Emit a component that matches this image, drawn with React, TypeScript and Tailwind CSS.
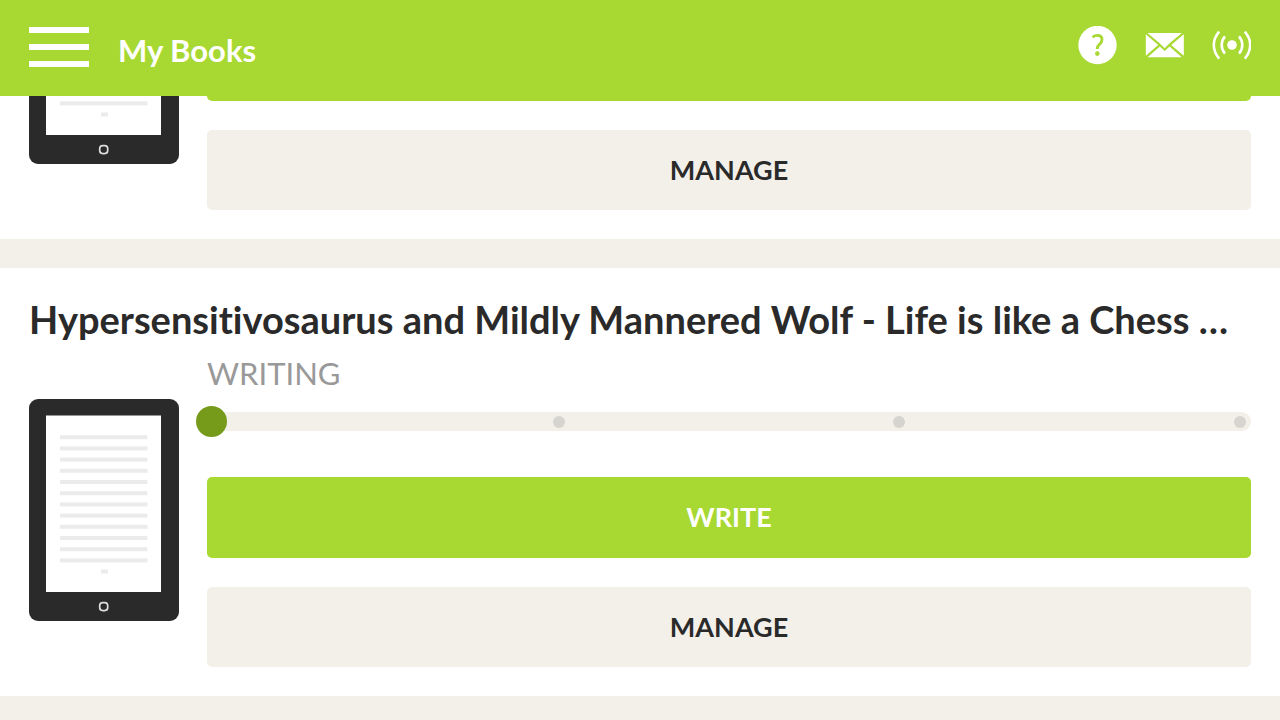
import { useEffect, useRef, useState } from 'react';

interface Book {
  id: string;
  title?: string;
  status?: string;
}

const books: Book[] = [
  { id: 'previous' },
  {
    id: 'hypersensitivosaurus',
    title: 'Hypersensitivosaurus and Mildly Mannered Wolf - Life is like a Chess Game',
    status: 'WRITING',
  },
];

const PAGE_LINES = Array.from({ length: 12 }, (_, i) => i);

const HelpIcon = () => (
  <svg viewBox="0 0 39 39" className="size-[39px]" aria-hidden="true">
    <circle cx="19.5" cy="19" r="19.2" fill="#fff" />
    <path
      d="M14.6 11.2c1.3-1.2 2.9-1.8 4.7-1.8 3 0 4.7 1.6 4.7 4.2 0 2.3-1.2 3.6-2.6 4.8-1.5 1.2-2.1 2.2-2.1 4.6"
      fill="none"
      stroke="#a8d832"
      strokeWidth="2.9"
    />
    <circle cx="19.3" cy="27.6" r="2.3" fill="#a8d832" />
  </svg>
);

const MailIcon = () => (
  <svg viewBox="0 0 39 39" className="size-[39px]" fill="#fff" aria-hidden="true">
    <path d="M2.5 7h34.3L24.6 17.3 19.7 22.3 14.6 17.3z" />
    <path d="M.8 8.3v21.4l12.4-10.8z" />
    <path d="M38.8 8.3v21.4L26.2 18.9z" />
    <path d="M2.6 31.2 14.9 20.4l4.8 4.6 4.9-4.6 12.2 10.8z" />
  </svg>
);

const BroadcastIcon = () => (
  <svg viewBox="0 0 39 39" className="size-[39px]" fill="none" stroke="#fff" strokeWidth="2.6" aria-hidden="true">
    <circle cx="20" cy="19" r="4.8" fill="#fff" stroke="none" />
    <path d="M13 10.4c-4.4 5-4.4 12.2 0 17.2M27 10.4c4.4 5 4.4 12.2 0 17.2" />
    <path d="M7.2 5.6c-7.2 8.2-7.2 18.8 0 27M32.8 5.6c7.2 8.2 7.2 18.8 0 27" />
  </svg>
);

const TabletPreview = () => (
  <svg viewBox="0 0 150 222" className="h-[222px] w-[150px] shrink-0" aria-hidden="true">
    <rect width="150" height="222" rx="9" fill="#2a2a2a" />
    <rect x="17" y="16.5" width="115" height="176.5" fill="#fff" />
    {PAGE_LINES.map(line => (
      <rect key={line} x="31" y={36.2 + line * 11.2} width="87.5" height="4" fill="#ebebeb" />
    ))}
    <rect x="72" y="170.5" width="7" height="4" fill="#ebebeb" />
    <rect x="70.7" y="203.6" width="8" height="8" rx="3" fill="none" stroke="#ddd" strokeWidth="1.7" />
  </svg>
);

const ProgressSlider = () => {
  const [stage, setStage] = useState(0);

  return (
    <div className="relative flex h-[19px] items-center justify-between rounded-full bg-[#f3f0ea] px-[5px]">
      {[0, 1, 2, 3].map(step => (
        <span key={step} className="size-3 rounded-full bg-[#d6d4ce]" />
      ))}
      <input
        type="range"
        min={0}
        max={3}
        value={stage}
        onChange={e => setStage(Number(e.target.value))}
        aria-label="Book progress"
        className="absolute -inset-x-[11px] -inset-y-1.5 appearance-none bg-transparent [&::-webkit-slider-thumb]:size-[31px] [&::-webkit-slider-thumb]:appearance-none [&::-webkit-slider-thumb]:rounded-full [&::-webkit-slider-thumb]:bg-[#769a1a]"
      />
    </div>
  );
};

const BookCard = ({ book }: { book: Book }) => (
  <article className="bg-white p-[29px]">
    {book.title && <h2 className="truncate text-[38px] leading-11 font-bold">{book.title}</h2>}
    {book.status && <p className="pt-3 pb-1.5 pl-[178px] text-[31px] leading-10 text-[#999]">{book.status}</p>}
    <div className="flex gap-7">
      <TabletPreview />
      <div className="min-w-0 flex-1 pt-[13px]">
        <ProgressSlider />
        <button className="mt-[46px] block h-[81px] w-full rounded-[5px] bg-[#a8d832] text-[27px] font-bold text-white">
          WRITE
        </button>
        <button className="mt-[29px] block h-20 w-full rounded-[5px] bg-[#f3f0ea] text-[27px] font-bold">
          MANAGE
        </button>
      </div>
    </div>
  </article>
);

const App = () => {
  const listRef = useRef<HTMLElement>(null);

  useEffect(() => {
    if (listRef.current) {
      listRef.current.scrollTop = 183;
    }
  }, []);

  return (
    <div className="flex h-screen flex-col bg-[#f3f0ea] font-['Lato',sans-serif] text-[#2a2a2a] [font-variant-ligatures:none]">
      <header className="flex h-24 shrink-0 items-start bg-[#a8d832] px-[29px] text-white">
        <button aria-label="Menu" className="mt-[27px] flex w-[60px] flex-col gap-[11px]">
          <span className="h-1.5 w-full bg-white" />
          <span className="h-1.5 w-full bg-white" />
          <span className="h-1.5 w-full bg-white" />
        </button>
        <h1 className="mt-[30px] ml-[29px] text-[31px] leading-10 font-bold">My Books</h1>
        <nav className="mt-[26px] ml-auto flex gap-7">
          <button aria-label="Help">
            <HelpIcon />
          </button>
          <button aria-label="Messages">
            <MailIcon />
          </button>
          <button aria-label="Broadcast">
            <BroadcastIcon />
          </button>
        </nav>
      </header>

      <main ref={listRef} className="flex-1 overflow-y-auto [scrollbar-width:none]">
        <div className="flex flex-col gap-[29px] pb-[29px]">
          {books.map(book => (
            <BookCard key={book.id} book={book} />
          ))}
        </div>
      </main>
    </div>
  );
};

export default App;
